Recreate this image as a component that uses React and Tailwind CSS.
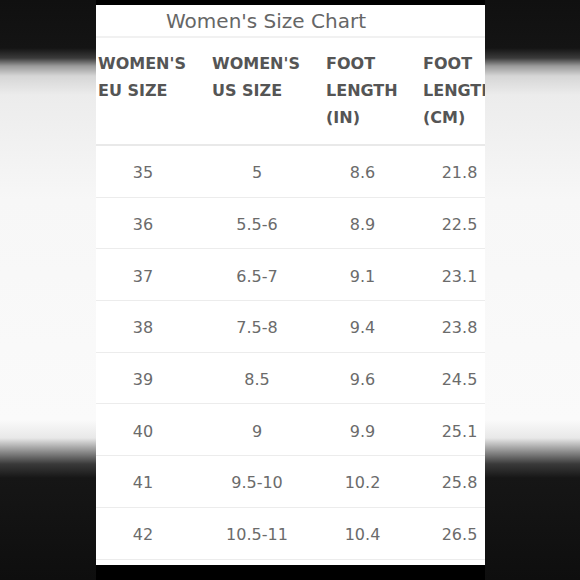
import React from 'react';

const rows = [
  ['35', '5', '8.6', '21.8'],
  ['36', '5.5-6', '8.9', '22.5'],
  ['37', '6.5-7', '9.1', '23.1'],
  ['38', '7.5-8', '9.4', '23.8'],
  ['39', '8.5', '9.6', '24.5'],
  ['40', '9', '9.9', '25.1'],
  ['41', '9.5-10', '10.2', '25.8'],
  ['42', '10.5-11', '10.4', '26.5'],
];

const headers = [
  ['WOMEN\'S', 'EU SIZE'],
  ['WOMEN\'S', 'US SIZE'],
  ['FOOT', 'LENGTH', '(IN)'],
  ['FOOT', 'LENGTH', '(CM)'],
];

const sideBg =
  'bg-[linear-gradient(to_bottom,#101010_0px,#141414_48px,#3a3a3a_58px,#9a9a9a_66px,#d6d6d6_76px,#ececec_95px,#f7f7f7_200px,#fafafa_420px,#e8e8e8_438px,#8a8a8a_452px,#3a3a3a_464px,#161616_478px,#0e0e0e_580px)]';

export default function App() {
  return (
    <div
      className="flex w-[580px] h-[580px] overflow-hidden bg-black"
      style={{ fontFamily: '"DejaVu Sans", sans-serif' }}
    >
      <div className={`w-[96px] h-full shrink-0 ${sideBg}`} />

      {/* chart panel */}
      <div className="w-[389px] h-full shrink-0 bg-black pt-[5px]">
        <div className="w-full h-[560px] bg-white overflow-hidden">
          <div className="h-[33px] border-b-2 border-[#f1f1f1]">
            <div className="w-[340px] h-full flex items-center justify-center text-[20px] text-[#666] whitespace-nowrap">
              Women's Size Chart
            </div>
          </div>
          <div className="w-[422px] grid grid-cols-[114px_114px_97px_97px] h-[108px] border-b-2 border-[#e9e9e9] pt-[12px]">
            {headers.map((lines, i) => (
              <div key={i} className="pl-[2px] text-[16px] leading-[27px] font-bold text-[#555] whitespace-nowrap">
                {lines.map((l) => (
                  <div key={l}>{l}</div>
                ))}
              </div>
            ))}
          </div>
          {rows.map((r) => (
            <div
              key={r[0]}
              className="w-[422px] grid grid-cols-[114px_114px_97px_97px] h-[51.7px] pt-[4px] border-b border-[#ececec] items-center text-[16px] text-[#6b6b6b]"
            >
              {r.map((v, j) => (
                <div key={j} className="pr-[20px] text-center whitespace-nowrap">
                  {v}
                </div>
              ))}
            </div>
          ))}
        </div>
      </div>

      <div className={`flex-1 h-full ${sideBg}`} />
    </div>
  );
}
